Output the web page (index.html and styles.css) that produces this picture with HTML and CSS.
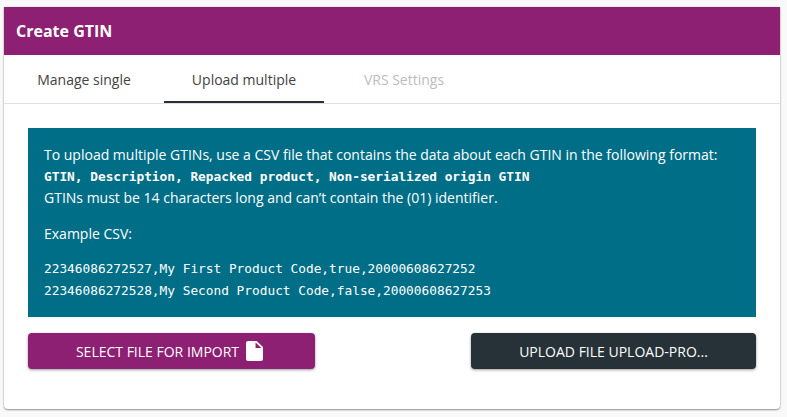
FILE: index.html
```html
<!DOCTYPE html>
<html lang="en">
<head>
<meta charset="utf-8">
<title>Create GTIN</title>
<link rel="stylesheet" href="styles.css">
</head>
<body>
<div class="card">
  <header class="card-header">Create GTIN</header>
  <nav class="tabs">
    <div class="tab">Manage single</div>
    <div class="tab active">Upload multiple</div>
    <div class="tab disabled">VRS Settings</div>
  </nav>
  <main class="content">
    <section class="info">
      <p class="intro">To upload multiple GTINs, use a CSV file that contains the data about each GTIN in the following format:<br>
      <code class="format">GTIN, Description, Repacked product, Non-serialized origin GTIN</code><br>
      GTINs must be 14 characters long and can’t contain the (01) identifier.</p>
      <p class="example-label">Example CSV:</p>
      <pre class="example">22346086272527,My First Product Code,true,20000608627252
22346086272528,My Second Product Code,false,20000608627253</pre>
    </section>
    <div class="actions">
      <button class="btn btn-select">SELECT FILE FOR IMPORT
        <svg class="file-icon" viewBox="4 2 16 20" width="17" height="20" preserveAspectRatio="none"><path fill="#fff" d="M6 2c-1.100 0-1.990.9-1.990 2L4 20c0 1.100.89 2 1.990 2H18c1.100 0 2-.9 2-2V8l-6-6H6zm7 7V3.500L18.500 9H13z"/></svg>
      </button>
      <button class="btn btn-upload">UPLOAD FILE UPLOAD-PRO...</button>
    </div>
  </main>
</div>
</body>
</html>
```
FILE: styles.css
```css
* { box-sizing: border-box; }
html, body { margin: 0; height: 100%; }
body {
  background: #f9f9f9;
  padding: 7px 7px 8px 4px;
  font-family: "Open Sans", sans-serif;
  font-size: 14px;
  color: #3c3c3c;
  overflow: hidden;
}
.card {
  height: 402px;
  background: #fff;
  border-radius: 0 0 4px 4px;
  box-shadow: 0 1px 2px rgba(0, 0, 0, .4), 0 0 2px rgba(0, 0, 0, .12);
}
.card-header {
  height: 48px;
  padding-left: 12px;
  background: #8d2072;
  color: #fff;
  font-size: 16px;
  font-weight: 700;
  line-height: 48px;
}
.tabs {
  display: flex;
  height: 49px;
  border-bottom: 1px solid #e0e0e0;
}
.tab {
  width: 160px;
  text-align: center;
  line-height: 50px;
  color: #424242;
}
.tab.active { border-bottom: 2px solid #263238; }
.tab.disabled { color: #bdbdbd; }
.content { padding: 24px; }
.info {
  height: 189px;
  padding: 16px;
  background: #006e87;
  color: #fff;
}
.info p { margin: 0; line-height: 21px; }
.format {
  font-family: "DejaVu Sans Mono", monospace;
  font-size: 12.800px;
  font-weight: 700;
}
.example-label { margin-top: 15px !important; }
.example {
  margin: 14px 0 0;
  font-family: "DejaVu Sans Mono", monospace;
  font-size: 12.800px;
  line-height: 22px;
}
.actions {
  display: flex;
  justify-content: space-between;
  margin-top: 16px;
}
.btn {
  display: flex;
  align-items: center;
  justify-content: center;
  gap: 7px;
  height: 36px;
  border: 0;
  border-radius: 4px;
  padding: 0;
  color: #fff;
  font-family: inherit;
  font-size: 14px;
  font-weight: 500;
  box-shadow: 0 1px 3px rgba(0, 0, 0, .4);
}
.btn-select { width: 287px; padding-right: 4px; background: #8d2072; }
.btn-upload { width: 285px; background: #263238; }
```
